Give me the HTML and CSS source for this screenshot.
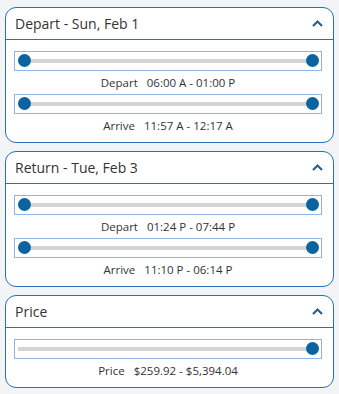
FILE: index.html
```html
<!DOCTYPE html>
<html lang="en">
<head>
    <meta charset="UTF-8">
    <meta name="viewport" content="width=device-width, initial-scale=1.0">
    <title>Flight filters</title>
    <link rel="stylesheet" href="styles.css">
</head>
<body>
    <div class="panel">
        <div class="panel-head">
            <span class="panel-title">Depart - Sun, Feb 1</span>
            <svg class="chevron" width="11" height="7" viewBox="0 0 11 7"><path d="M1 6 L5.5 1.5 L10 6" /></svg>
        </div>
        <div class="panel-body">
            <div class="slider">
                <div class="track"></div>
                <span class="knob knob-min"></span>
                <span class="knob knob-max"></span>
            </div>
            <div class="range-label"><span class="name">Depart</span>06:00 A - 01:00 P</div>
            <div class="slider">
                <div class="track"></div>
                <span class="knob knob-min"></span>
                <span class="knob knob-max"></span>
            </div>
            <div class="range-label"><span class="name">Arrive</span>11:57 A - 12:17 A</div>
        </div>
    </div>

    <div class="panel">
        <div class="panel-head">
            <span class="panel-title">Return - Tue, Feb 3</span>
            <svg class="chevron" width="11" height="7" viewBox="0 0 11 7"><path d="M1 6 L5.5 1.5 L10 6" /></svg>
        </div>
        <div class="panel-body">
            <div class="slider">
                <div class="track"></div>
                <span class="knob knob-min"></span>
                <span class="knob knob-max"></span>
            </div>
            <div class="range-label"><span class="name">Depart</span>01:24 P - 07:44 P</div>
            <div class="slider">
                <div class="track"></div>
                <span class="knob knob-min"></span>
                <span class="knob knob-max"></span>
            </div>
            <div class="range-label"><span class="name">Arrive</span>11:10 P - 06:14 P</div>
        </div>
    </div>

    <div class="panel">
        <div class="panel-head">
            <span class="panel-title">Price</span>
            <svg class="chevron" width="11" height="7" viewBox="0 0 11 7"><path d="M1 6 L5.5 1.5 L10 6" /></svg>
        </div>
        <div class="panel-body">
            <div class="slider">
                <div class="track"></div>
                <span class="knob knob-max"></span>
            </div>
            <div class="range-label"><span class="name">Price</span>$259.92 - $5,394.04</div>
        </div>
    </div>
</body>
</html>
```

FILE: styles.css
```css
body {
    margin: 0;
    padding: 7px 5px;
    background: #f2f4f5;
    font-family: "Open Sans", sans-serif;
    color: #333;
}
.panel {
    background: white;
    border: 1px solid #2a6fb5;
    border-radius: 11px;
    margin-bottom: 8px;
}
.panel-head {
    display: flex;
    align-items: center;
    justify-content: space-between;
    height: 31px;
    padding: 0 10px 0 9px;
    border-bottom: 1px solid #2a6fb5;
}
.panel-title {
    font-size: 14px;
    color: #333;
}
.chevron {
    fill: none;
    stroke: #1f5d92;
    stroke-width: 2;
}
.panel-body {
    padding: 11px 11px 5px 8px;
}
.slider {
    position: relative;
    height: 18px;
    border: 1px solid #94b0e4;
    display: flex;
    align-items: center;
    padding: 0 3px;
}
.track {
    flex: 1;
    height: 4px;
    background: #d2d5d2;
}
.knob {
    position: absolute;
    top: 2px;
    width: 13px;
    height: 13px;
    border-radius: 50%;
    background: #0b64a0;
}
.knob-min {
    left: 3px;
}
.knob-max {
    right: 2px;
}
.range-label {
    text-align: center;
    font-size: 11.5px;
    line-height: 16px;
    padding: 4px 0 3px;
}
.range-label .name {
    margin-right: 9px;
}
```
